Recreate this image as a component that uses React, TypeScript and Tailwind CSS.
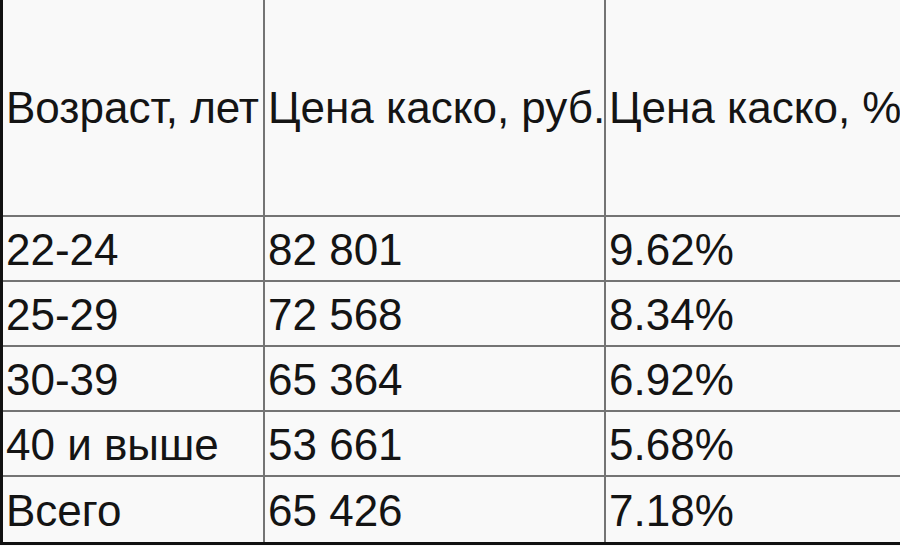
import React from 'react';

const rows = [
  ['22-24', '82 801', '9.62%'],
  ['25-29', '72 568', '8.34%'],
  ['30-39', '65 364', '6.92%'],
  ['40 и выше', '53 661', '5.68%'],
  ['Всего', '65 426', '7.18%'],
];

const headers = ['Возраст, лет', 'Цена каско, руб.', 'Цена каско, %'];

export default function App() {
  return (
    <div className="w-[900px] h-[546px] overflow-hidden bg-[#f9f9f9] text-[#141414] font-['Liberation_Sans',Arial,sans-serif]">
      <div className="grid grid-cols-[262px_341px_1fr] w-[1000px] border-l-[3px] border-b-[3px] border-l-[#111] border-b-[#111]">
        {headers.map((h, i) => (
          <div
            key={h}
            className={`h-[217px] flex items-center pl-[3px] text-[44px] leading-none whitespace-nowrap border-b-2 border-[#747474] ${i < 2 ? 'border-r-2' : ''}`}
          >
            {h}
          </div>
        ))}
        {rows.map((r, ri) =>
          r.map((c, ci) => (
            <div
              key={ri + '-' + ci}
              className={`${ri === 4 ? 'h-[65px] border-b-0' : 'h-[65px] border-b-2'} flex items-center pl-[3px] pt-[2px] text-[44px] leading-none whitespace-nowrap border-[#747474] ${ci < 2 ? 'border-r-2' : ''}`}
            >
              {c}
            </div>
          ))
        )}
      </div>
    </div>
  );
}
